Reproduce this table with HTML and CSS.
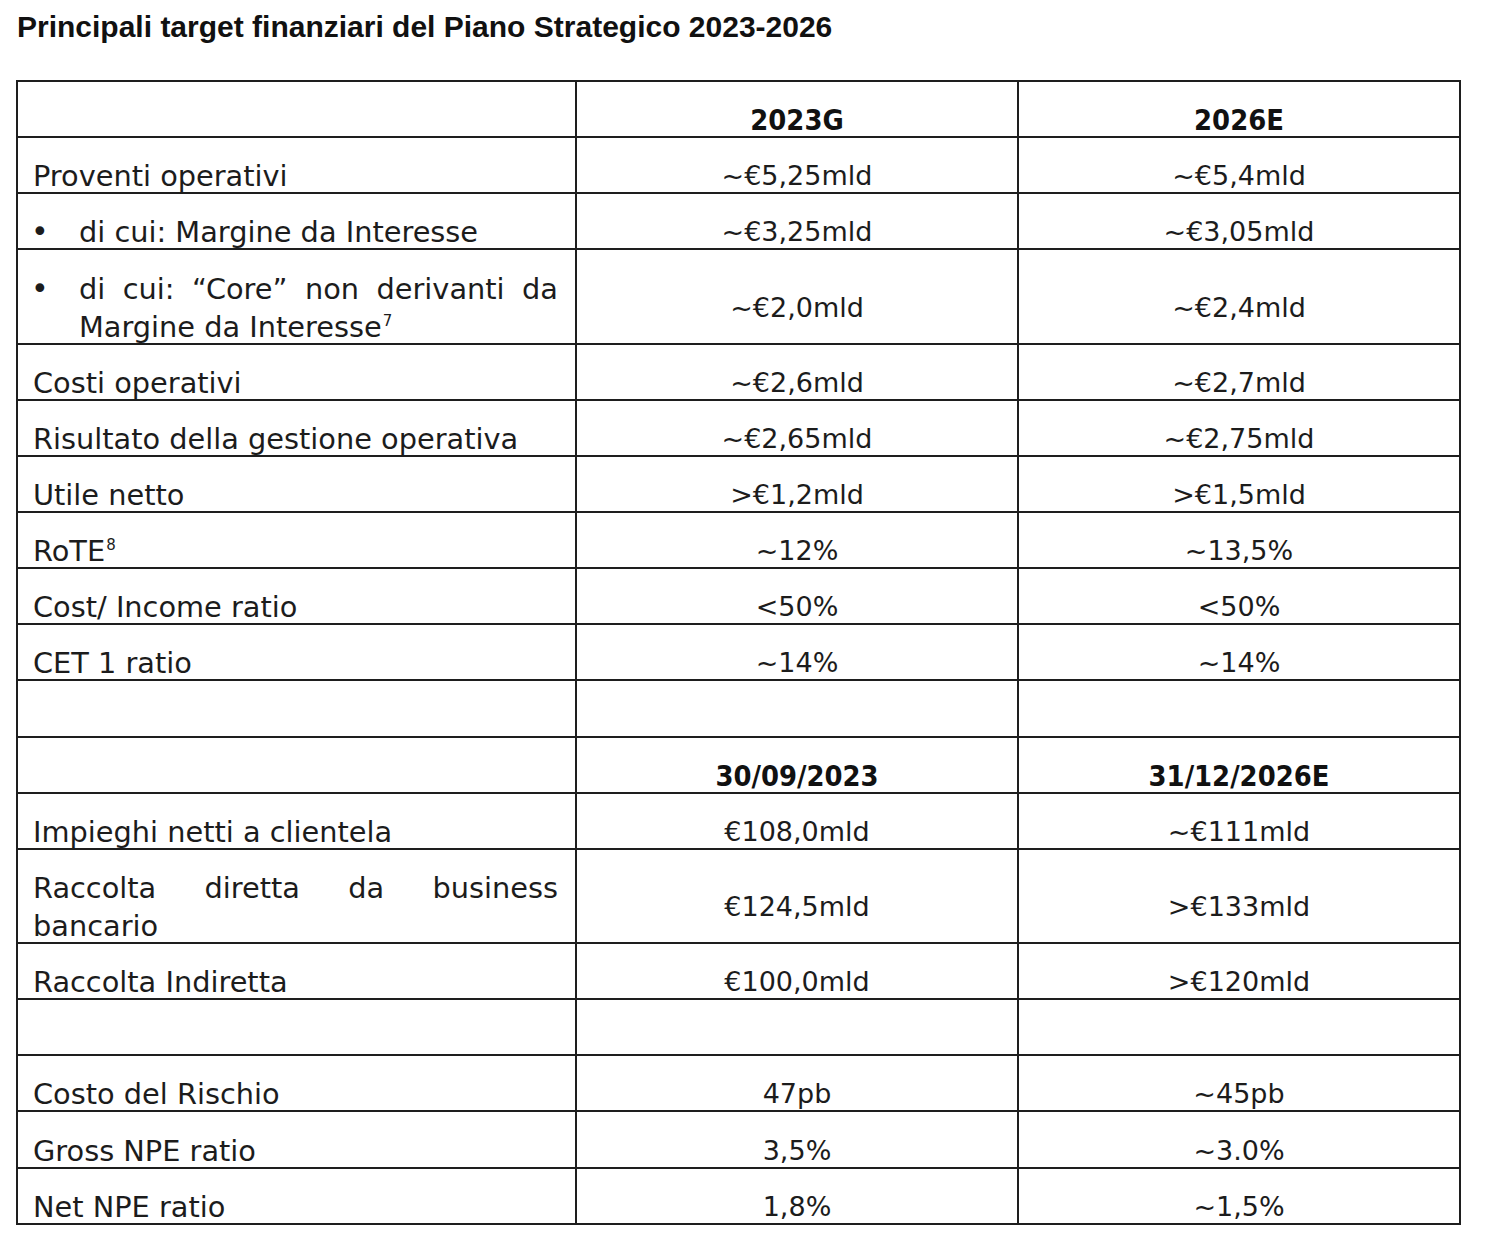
FILE: index.html
```html
<!DOCTYPE html>
<html lang="it">
<head>
<meta charset="utf-8">
<title>Principali target finanziari</title>
<link rel="stylesheet" href="styles.css">
</head>
<body>
<h1 class="title">Principali target finanziari del Piano Strategico 2023-2026</h1>
<table class="grid">
  <colgroup>
    <col class="c-label">
    <col class="c-val">
    <col class="c-val">
  </colgroup>
  <tbody>
    <tr><td><div class="t">&nbsp;</div></td><th><div class="t">2023G</div></th><th><div class="t">2026E</div></th></tr>
    <tr><td class="label"><div class="t">Proventi operativi</div></td><td class="val"><div class="t">~€5,25mld</div></td><td class="val"><div class="t">~€5,4mld</div></td></tr>
    <tr><td class="label"><div class="t bullet"><span class="dot">•</span><span class="btext">di cui: Margine da Interesse</span></div></td><td class="val"><div class="t">~€3,25mld</div></td><td class="val"><div class="t">~€3,05mld</div></td></tr>
    <tr><td class="label"><div class="t bullet"><span class="dot">•</span><span class="btext just">di cui: “Core” non derivanti da Margine da Interesse<sup>7</sup></span></div></td><td class="val"><div class="t">~€2,0mld</div></td><td class="val"><div class="t">~€2,4mld</div></td></tr>
    <tr><td class="label"><div class="t">Costi operativi</div></td><td class="val"><div class="t">~€2,6mld</div></td><td class="val"><div class="t">~€2,7mld</div></td></tr>
    <tr><td class="label"><div class="t">Risultato della gestione operativa</div></td><td class="val"><div class="t">~€2,65mld</div></td><td class="val"><div class="t">~€2,75mld</div></td></tr>
    <tr><td class="label"><div class="t">Utile netto</div></td><td class="val"><div class="t">&gt;€1,2mld</div></td><td class="val"><div class="t">&gt;€1,5mld</div></td></tr>
    <tr><td class="label"><div class="t">RoTE<sup>8</sup></div></td><td class="val"><div class="t">~12%</div></td><td class="val"><div class="t">~13,5%</div></td></tr>
    <tr><td class="label"><div class="t">Cost/ Income ratio</div></td><td class="val"><div class="t">&lt;50%</div></td><td class="val"><div class="t">&lt;50%</div></td></tr>
    <tr><td class="label"><div class="t">CET 1 ratio</div></td><td class="val"><div class="t">~14%</div></td><td class="val"><div class="t">~14%</div></td></tr>
    <tr><td><div class="t">&nbsp;</div></td><td></td><td></td></tr>
    <tr><td><div class="t">&nbsp;</div></td><th><div class="t">30/09/2023</div></th><th><div class="t">31/12/2026E</div></th></tr>
    <tr><td class="label"><div class="t">Impieghi netti a clientela</div></td><td class="val"><div class="t">€108,0mld</div></td><td class="val"><div class="t">~€111mld</div></td></tr>
    <tr><td class="label"><div class="t just">Raccolta diretta da business bancario</div></td><td class="val"><div class="t">€124,5mld</div></td><td class="val"><div class="t">&gt;€133mld</div></td></tr>
    <tr><td class="label"><div class="t">Raccolta Indiretta</div></td><td class="val"><div class="t">€100,0mld</div></td><td class="val"><div class="t">&gt;€120mld</div></td></tr>
    <tr><td><div class="t">&nbsp;</div></td><td></td><td></td></tr>
    <tr><td class="label"><div class="t">Costo del Rischio</div></td><td class="val"><div class="t">47pb</div></td><td class="val"><div class="t">~45pb</div></td></tr>
    <tr><td class="label"><div class="t">Gross NPE ratio</div></td><td class="val"><div class="t">3,5%</div></td><td class="val"><div class="t">~3.0%</div></td></tr>
    <tr><td class="label"><div class="t">Net NPE ratio</div></td><td class="val"><div class="t">1,8%</div></td><td class="val"><div class="t">~1,5%</div></td></tr>
  </tbody>
</table>
</body>
</html>
```

FILE: styles.css
```css
html, body {
  margin: 0;
  padding: 0;
  background: #ffffff;
}

body {
  padding: 8px 0 0 16px;
  color: #1c1c1c;
  font-family: "DejaVu Sans", "Noto Sans", sans-serif;
}

.title {
  margin: 0 0 34px 1px;
  font-family: "Liberation Sans", Arial, sans-serif;
  font-weight: bold;
  font-size: 30px;
  line-height: 38px;
  color: #111;
}

.grid {
  border-collapse: collapse;
  table-layout: fixed;
  width: 1444px;
  font-size: 28.8px;
  line-height: 38px;
}

.c-label { width: 559px; }
.c-val { width: 442px; }

.grid td,
.grid th {
  border: 2px solid #1e1e1e;
  padding: 19.15px 0 0 0;
  vertical-align: middle;
}

.t {
  margin-bottom: -3px;
}

.grid th {
  font-family: "DejaVu Sans Condensed", "DejaVu Sans", sans-serif;
  font-weight: bold;
  font-size: 28.8px;
  text-align: center;
  color: #111;
}

.grid td.label {
  padding-left: 15px;
  padding-right: 17px;
  text-align: left;
  vertical-align: bottom;
}

.grid td.val {
  text-align: center;
  font-size: 27px;
}

.just {
  text-align: justify;
}

.bullet {
  display: flex;
  align-items: flex-start;
}

.dot {
  flex: 0 0 48px;
  font-size: 30px;
  margin-left: -2px;
}

.btext {
  flex: 1;
}

sup {
  font-size: 15px;
  line-height: 0;
  vertical-align: 11px;
  margin-left: 1px;
}
```
